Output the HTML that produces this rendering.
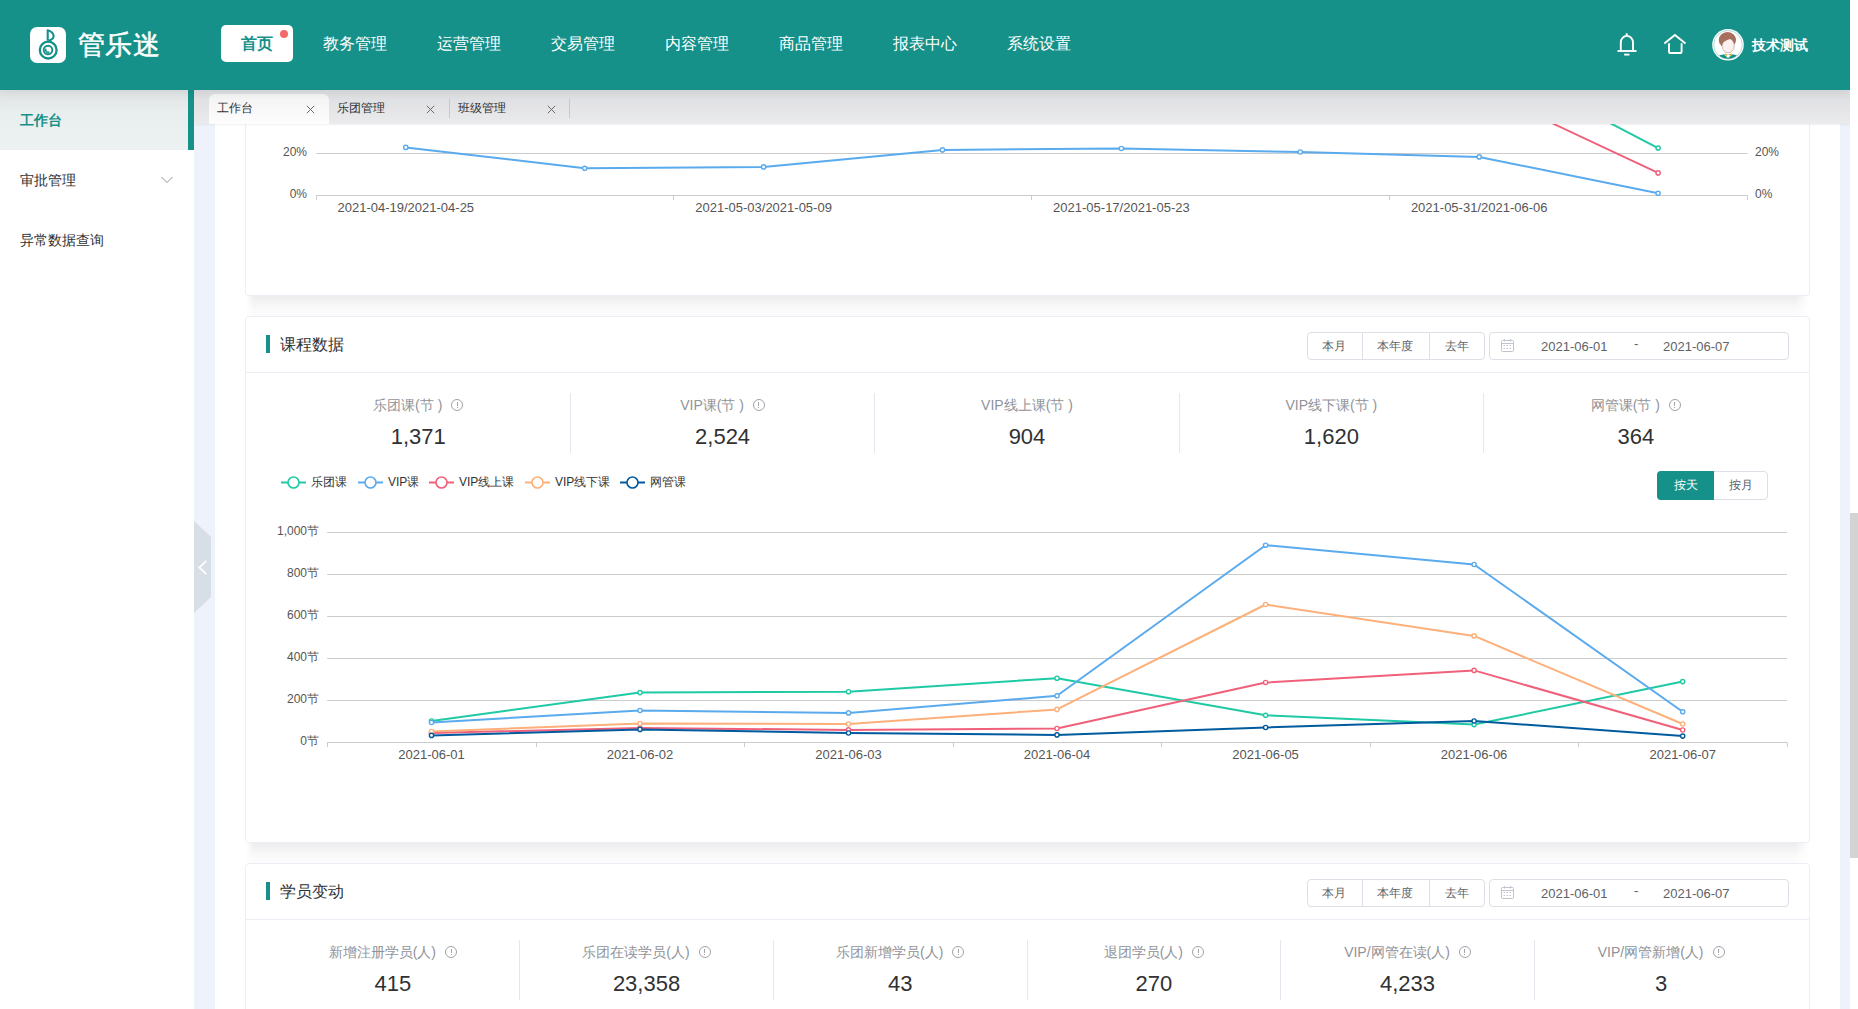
<!DOCTYPE html>
<html><head><meta charset="utf-8">
<style>
*{box-sizing:border-box;margin:0;padding:0}
html,body{width:1858px;height:1009px;overflow:hidden;background:#fff;font-family:"Liberation Sans",sans-serif;color:#303133}
.a{position:absolute}
#header{left:0;top:0;width:1850px;height:90px;background:#15918a;z-index:10;box-shadow:0 2px 10px rgba(0,0,0,.07)}
.nav{position:absolute;top:34px;font-size:16px;line-height:20px;color:#fff;white-space:nowrap}
#sidebar{left:0;top:90px;width:194px;height:919px;background:#fff;z-index:6}
.side{position:absolute;left:0;width:194px;height:60px;font-size:14px;line-height:60px;padding-left:20px;color:#303133}
#tabs{left:194px;top:90px;width:1656px;height:34px;background:linear-gradient(#dcdde0,#ebebed);z-index:5;box-shadow:0 1px 2px rgba(0,0,0,.06)}
.tab{position:absolute;top:4px;height:30px;width:120px;font-size:12px;line-height:28px;padding-left:8px;color:#303133}
.tab .x{position:absolute;left:97px;top:11px}
.card{position:absolute;left:245px;width:1565px;background:#fff;border:1px solid #ebeef5;border-radius:4px;}
.chd{position:absolute;left:0;top:0;width:100%;height:56px;border-bottom:1px solid #ebeef5}
.ttl{position:absolute;left:34px;top:17px;font-size:16px;line-height:22px;color:#303133}
.bar{position:absolute;left:20px;top:18px;width:4px;height:18px;background:#15918a}
.bg{position:absolute;left:1061px;top:15px;width:178px;height:28px;border:1px solid #dcdfe6;border-radius:4px;font-size:12px;color:#606266}
.bg span{position:absolute;top:0;height:26px;line-height:26px;text-align:center}
.dp{position:absolute;left:1243px;top:15px;width:300px;height:28px;border:1px solid #dcdfe6;border-radius:4px;font-size:13px;color:#606266}
.stat{position:absolute;text-align:center}
.sl{font-size:14px;line-height:20px;color:#909399;white-space:nowrap}
.sv{font-size:22px;line-height:30px;color:#303133;margin-top:7px}
.info{display:inline-block;width:12px;height:12px;border:1px solid #a0a3a8;border-radius:50%;position:relative;vertical-align:-1px;margin-left:9px}
.info:after{content:"";position:absolute;left:4.5px;top:2px;width:1px;height:4px;background:#a0a3a8}
.info:before{content:"";position:absolute;left:4.5px;top:7px;width:1px;height:1px;background:#a0a3a8}
.div{position:absolute;width:1px;height:60px;background:#e4e7ed}
svg text{font-family:"Liberation Sans",sans-serif}
</style></head><body>

<!-- content -->
<div class="a" style="left:194px;top:90px;width:21px;height:919px;background:#eef2fa"></div>
<div class="a" style="left:1840px;top:90px;width:10px;height:919px;background:#eef2fa"></div>

<div class="a" style="left:246px;top:296px;width:1563px;height:20px;background:linear-gradient(to right,#fff,rgba(255,255,255,0) 8px,rgba(255,255,255,0) calc(100% - 14px),#fff),linear-gradient(#ececec,#f4f4f4 35%,#fafafa 65%,#fcfcfc)"></div>
<div class="a" style="left:246px;top:843px;width:1563px;height:20px;background:linear-gradient(to right,#fff,rgba(255,255,255,0) 8px,rgba(255,255,255,0) calc(100% - 14px),#fff),linear-gradient(#ececec,#f4f4f4 35%,#fafafa 65%,#fcfcfc)"></div>
<!-- card 1 (partial) -->
<div class="card" style="top:-200px;height:496px"></div>
<!-- card 2 -->
<div class="card" style="top:316px;height:527px">
  <div class="chd"><div class="bar"></div><div class="ttl">课程数据</div>
    <div class="bg"><span style="left:-14.3px;width:80px">本月</span><i class="a" style="left:54px;top:0;width:1px;height:26px;background:#dcdfe6"></i><span style="left:47.4px;width:80px">本年度</span><i class="a" style="left:121px;top:0;width:1px;height:26px;background:#dcdfe6"></i><span style="left:108.5px;width:80px">去年</span></div>
    <div class="dp"><svg class="a" style="left:11px;top:6px" width="14" height="13" viewBox="0 0 14 13"><g fill="none" stroke="#c0c4cc" stroke-width="1"><rect x="0.5" y="1.5" width="12" height="11" rx="1"/><path d="M0.5 4.5 H12.5"/><path d="M3.5 0 V2.5 M9.5 0 V2.5"/></g><g fill="#c0c4cc"><rect x="2.5" y="6" width="1.5" height="1"/><rect x="5.5" y="6" width="1.5" height="1"/><rect x="8.5" y="6" width="1.5" height="1"/><rect x="2.5" y="9" width="1.5" height="1"/><rect x="5.5" y="9" width="1.5" height="1"/><rect x="8.5" y="9" width="1.5" height="1"/></g></svg><span class="a" style="left:51px;top:6px;line-height:15px">2021-06-01</span><span class="a" style="left:144px;top:3px;line-height:15px">-</span><span class="a" style="left:173px;top:6px;line-height:15px">2021-06-07</span></div>
  </div>
<div class="stat" style="left:20.0px;top:78px;width:304.4px"><div class="sl">乐团课(节 )<i class="info"></i></div><div class="sv">1,371</div></div>
<div class="stat" style="left:324.4px;top:78px;width:304.4px"><div class="sl">VIP课(节 )<i class="info"></i></div><div class="sv">2,524</div></div>
<div class="div" style="left:324px;top:76px"></div>
<div class="stat" style="left:628.8px;top:78px;width:304.4px"><div class="sl">VIP线上课(节 )</div><div class="sv">904</div></div>
<div class="div" style="left:628px;top:76px"></div>
<div class="stat" style="left:933.2px;top:78px;width:304.4px"><div class="sl">VIP线下课(节 )</div><div class="sv">1,620</div></div>
<div class="div" style="left:933px;top:76px"></div>
<div class="stat" style="left:1237.6px;top:78px;width:304.4px"><div class="sl">网管课(节 )<i class="info"></i></div><div class="sv">364</div></div>
<div class="div" style="left:1237px;top:76px"></div>
  <div class="a" style="left:1411px;top:154px;width:111px;height:29px;border:1px solid #dcdfe6;border-radius:4px;font-size:12px;color:#606266"><span class="a" style="left:-1px;top:-1px;width:57px;height:29px;background:#15918a;color:#fff;text-align:center;line-height:28px;border-radius:4px 0 0 4px;padding-left:1px">按天</span><span class="a" style="left:56px;top:0;width:54px;height:27px;text-align:center;line-height:27px">按月</span></div>
</div>
<!-- card 3 -->
<div class="card" style="top:863px;height:300px">
  <div class="chd"><div class="bar"></div><div class="ttl">学员变动</div>
    <div class="bg"><span style="left:-14.3px;width:80px">本月</span><i class="a" style="left:54px;top:0;width:1px;height:26px;background:#dcdfe6"></i><span style="left:47.4px;width:80px">本年度</span><i class="a" style="left:121px;top:0;width:1px;height:26px;background:#dcdfe6"></i><span style="left:108.5px;width:80px">去年</span></div>
    <div class="dp"><svg class="a" style="left:11px;top:6px" width="14" height="13" viewBox="0 0 14 13"><g fill="none" stroke="#c0c4cc" stroke-width="1"><rect x="0.5" y="1.5" width="12" height="11" rx="1"/><path d="M0.5 4.5 H12.5"/><path d="M3.5 0 V2.5 M9.5 0 V2.5"/></g><g fill="#c0c4cc"><rect x="2.5" y="6" width="1.5" height="1"/><rect x="5.5" y="6" width="1.5" height="1"/><rect x="8.5" y="6" width="1.5" height="1"/><rect x="2.5" y="9" width="1.5" height="1"/><rect x="5.5" y="9" width="1.5" height="1"/><rect x="8.5" y="9" width="1.5" height="1"/></g></svg><span class="a" style="left:51px;top:6px;line-height:15px">2021-06-01</span><span class="a" style="left:144px;top:3px;line-height:15px">-</span><span class="a" style="left:173px;top:6px;line-height:15px">2021-06-07</span></div>
  </div>
<div class="stat" style="left:20.0px;top:78px;width:253.7px"><div class="sl">新增注册学员(人)<i class="info"></i></div><div class="sv">415</div></div>
<div class="stat" style="left:273.7px;top:78px;width:253.7px"><div class="sl">乐团在读学员(人)<i class="info"></i></div><div class="sv">23,358</div></div>
<div class="div" style="left:273px;top:76px"></div>
<div class="stat" style="left:527.3px;top:78px;width:253.7px"><div class="sl">乐团新增学员(人)<i class="info"></i></div><div class="sv">43</div></div>
<div class="div" style="left:527px;top:76px"></div>
<div class="stat" style="left:781.0px;top:78px;width:253.7px"><div class="sl">退团学员(人)<i class="info"></i></div><div class="sv">270</div></div>
<div class="div" style="left:781px;top:76px"></div>
<div class="stat" style="left:1034.7px;top:78px;width:253.7px"><div class="sl">VIP/网管在读(人)<i class="info"></i></div><div class="sv">4,233</div></div>
<div class="div" style="left:1034px;top:76px"></div>
<div class="stat" style="left:1288.3px;top:78px;width:253.7px"><div class="sl">VIP/网管新增(人)<i class="info"></i></div><div class="sv">3</div></div>
<div class="div" style="left:1288px;top:76px"></div>
</div>

<!-- SVG charts layer -->
<svg class="a" style="left:0;top:0" width="1858" height="1009" viewBox="0 0 1858 1009">
 <g id="chart1">
  <g stroke="#cccccc" stroke-width="1" fill="none">
   <line x1="316.4" y1="153.5" x2="1747.5" y2="153.5"/>
   <line x1="316.4" y1="195.5" x2="1747.5" y2="195.5"/>
   <line x1="316.5" y1="195.5" x2="316.5" y2="200"/>
   <line x1="673.5" y1="195.5" x2="673.5" y2="200"/>
   <line x1="1031.5" y1="195.5" x2="1031.5" y2="200"/>
   <line x1="1389.5" y1="195.5" x2="1389.5" y2="200"/>
   <line x1="1747.5" y1="195.5" x2="1747.5" y2="200"/>
  </g>
  <g font-size="12" fill="#555">
   <text x="307" y="156" text-anchor="end">20%</text>
   <text x="307" y="198" text-anchor="end">0%</text>
   <text x="1755" y="156">20%</text>
   <text x="1755" y="198">0%</text>
   <text x="405.8" y="212" text-anchor="middle" font-size="13">2021-04-19/2021-04-25</text>
   <text x="763.6" y="212" text-anchor="middle" font-size="13">2021-05-03/2021-05-09</text>
   <text x="1121.4" y="212" text-anchor="middle" font-size="13">2021-05-17/2021-05-23</text>
   <text x="1479.2" y="212" text-anchor="middle" font-size="13">2021-05-31/2021-06-06</text>
  </g>
  <g fill="none" stroke-width="2" stroke-linejoin="round">
   <polyline stroke="#1ec9a4" points="1479.2,54.8 1658.1,148.1"/>
   <polyline stroke="#f0607a" points="1479.2,89 1658.1,172.9"/>
   <polyline stroke="#5aaaee" points="405.8,147.4 584.7,168.3 763.6,166.9 942.5,149.9 1121.4,148.5 1300.3,152.0 1479.2,156.9 1658.1,193.3"/>
  </g>
  <g fill="#fff" stroke-width="1.4">
   <g stroke="#1ec9a4"><circle cx="1658.1" cy="148.1" r="2.1"/></g>
   <g stroke="#f0607a"><circle cx="1658.1" cy="172.9" r="2.1"/></g>
   <g stroke="#5aaaee"><circle cx="405.8" cy="147.4" r="2.1"/><circle cx="584.7" cy="168.3" r="2.1"/><circle cx="763.6" cy="166.9" r="2.1"/><circle cx="942.5" cy="149.9" r="2.1"/><circle cx="1121.4" cy="148.5" r="2.1"/><circle cx="1300.3" cy="152" r="2.1"/><circle cx="1479.2" cy="156.9" r="2.1"/><circle cx="1658.1" cy="193.3" r="2.1"/></g>
  </g>
 </g>
<g id="chart2">
 <g stroke="#cccccc" stroke-width="1" fill="none">
  <line x1="327.2" y1="532.5" x2="1787" y2="532.5"/>
  <line x1="327.2" y1="574.5" x2="1787" y2="574.5"/>
  <line x1="327.2" y1="616.5" x2="1787" y2="616.5"/>
  <line x1="327.2" y1="658.5" x2="1787" y2="658.5"/>
  <line x1="327.2" y1="700.5" x2="1787" y2="700.5"/>
  <line x1="327.2" y1="742.5" x2="1787" y2="742.5"/>
  <line x1="327.5" y1="742.5" x2="327.5" y2="747"/>
  <line x1="536.5" y1="742.5" x2="536.5" y2="747"/>
  <line x1="744.5" y1="742.5" x2="744.5" y2="747"/>
  <line x1="953.5" y1="742.5" x2="953.5" y2="747"/>
  <line x1="1161.5" y1="742.5" x2="1161.5" y2="747"/>
  <line x1="1370.5" y1="742.5" x2="1370.5" y2="747"/>
  <line x1="1578.5" y1="742.5" x2="1578.5" y2="747"/>
  <line x1="1787.5" y1="742.5" x2="1787.5" y2="747"/>
 </g>
 <g font-size="12" fill="#555">
  <text x="319" y="536" dy="-1" text-anchor="end">1,000节</text>
  <text x="319" y="578" dy="-1" text-anchor="end">800节</text>
  <text x="319" y="620" dy="-1" text-anchor="end">600节</text>
  <text x="319" y="662" dy="-1" text-anchor="end">400节</text>
  <text x="319" y="704" dy="-1" text-anchor="end">200节</text>
  <text x="319" y="746" dy="-1" text-anchor="end">0节</text>
  <text x="431.5" y="759" text-anchor="middle" font-size="13">2021-06-01</text>
  <text x="640.0" y="759" text-anchor="middle" font-size="13">2021-06-02</text>
  <text x="848.5" y="759" text-anchor="middle" font-size="13">2021-06-03</text>
  <text x="1057.0" y="759" text-anchor="middle" font-size="13">2021-06-04</text>
  <text x="1265.6" y="759" text-anchor="middle" font-size="13">2021-06-05</text>
  <text x="1474.1" y="759" text-anchor="middle" font-size="13">2021-06-06</text>
  <text x="1682.7" y="759" text-anchor="middle" font-size="13">2021-06-07</text>
 </g>
 <g fill="none" stroke-width="2" stroke-linejoin="round">
  <polyline stroke="#1ec9a4" points="431.5,721 640.0,692.6 848.5,691.7 1057.0,678.2 1265.6,715.3 1474.1,724.6 1682.7,681.6"/>
  <polyline stroke="#5aaaee" points="431.5,722.5 640.0,710.5 848.5,712.9 1057.0,695.8 1265.6,545.2 1474.1,564.5 1682.7,711.8"/>
  <polyline stroke="#f0607a" points="431.5,733 640.0,728 848.5,729.9 1057.0,728.5 1265.6,682.5 1474.1,670.4 1682.7,730"/>
  <polyline stroke="#fdb07a" points="431.5,731.5 640.0,723.5 848.5,724 1057.0,709.4 1265.6,604.5 1474.1,635.9 1682.7,724"/>
  <polyline stroke="#005a9e" points="431.5,735.4 640.0,729.4 848.5,733 1057.0,734.9 1265.6,727.5 1474.1,721 1682.7,736.1"/>
 </g>
 <g fill="#fff" stroke-width="1.4">
  <g stroke="#1ec9a4"><circle cx="431.5" cy="721" r="2.1"/><circle cx="640.0" cy="692.6" r="2.1"/><circle cx="848.5" cy="691.7" r="2.1"/><circle cx="1057.0" cy="678.2" r="2.1"/><circle cx="1265.6" cy="715.3" r="2.1"/><circle cx="1474.1" cy="724.6" r="2.1"/><circle cx="1682.7" cy="681.6" r="2.1"/></g>
  <g stroke="#5aaaee"><circle cx="431.5" cy="722.5" r="2.1"/><circle cx="640.0" cy="710.5" r="2.1"/><circle cx="848.5" cy="712.9" r="2.1"/><circle cx="1057.0" cy="695.8" r="2.1"/><circle cx="1265.6" cy="545.2" r="2.1"/><circle cx="1474.1" cy="564.5" r="2.1"/><circle cx="1682.7" cy="711.8" r="2.1"/></g>
  <g stroke="#f0607a"><circle cx="431.5" cy="733" r="2.1"/><circle cx="640.0" cy="728" r="2.1"/><circle cx="848.5" cy="729.9" r="2.1"/><circle cx="1057.0" cy="728.5" r="2.1"/><circle cx="1265.6" cy="682.5" r="2.1"/><circle cx="1474.1" cy="670.4" r="2.1"/><circle cx="1682.7" cy="730" r="2.1"/></g>
  <g stroke="#fdb07a"><circle cx="431.5" cy="731.5" r="2.1"/><circle cx="640.0" cy="723.5" r="2.1"/><circle cx="848.5" cy="724" r="2.1"/><circle cx="1057.0" cy="709.4" r="2.1"/><circle cx="1265.6" cy="604.5" r="2.1"/><circle cx="1474.1" cy="635.9" r="2.1"/><circle cx="1682.7" cy="724" r="2.1"/></g>
  <g stroke="#005a9e"><circle cx="431.5" cy="735.4" r="2.1"/><circle cx="640.0" cy="729.4" r="2.1"/><circle cx="848.5" cy="733" r="2.1"/><circle cx="1057.0" cy="734.9" r="2.1"/><circle cx="1265.6" cy="727.5" r="2.1"/><circle cx="1474.1" cy="721" r="2.1"/><circle cx="1682.7" cy="736.1" r="2.1"/></g>
 </g>
 <g>
  <line x1="281" y1="482.5" x2="306" y2="482.5" stroke="#1ec9a4" stroke-width="2"/><circle cx="293.5" cy="482.5" r="5.5" fill="#fff" stroke="#1ec9a4" stroke-width="1.6"/><text x="311" y="486" font-size="12" fill="#333">乐团课</text>
  <line x1="358" y1="482.5" x2="383" y2="482.5" stroke="#5aaaee" stroke-width="2"/><circle cx="370.5" cy="482.5" r="5.5" fill="#fff" stroke="#5aaaee" stroke-width="1.6"/><text x="388" y="486" font-size="12" fill="#333">VIP课</text>
  <line x1="429" y1="482.5" x2="454" y2="482.5" stroke="#f0607a" stroke-width="2"/><circle cx="441.5" cy="482.5" r="5.5" fill="#fff" stroke="#f0607a" stroke-width="1.6"/><text x="459" y="486" font-size="12" fill="#333">VIP线上课</text>
  <line x1="525" y1="482.5" x2="550" y2="482.5" stroke="#fdb07a" stroke-width="2"/><circle cx="537.5" cy="482.5" r="5.5" fill="#fff" stroke="#fdb07a" stroke-width="1.6"/><text x="555" y="486" font-size="12" fill="#333">VIP线下课</text>
  <line x1="620" y1="482.5" x2="645" y2="482.5" stroke="#005a9e" stroke-width="2"/><circle cx="632.5" cy="482.5" r="5.5" fill="#fff" stroke="#005a9e" stroke-width="1.6"/><text x="650" y="486" font-size="12" fill="#333">网管课</text>
 </g>
</g>
</svg>

<!-- tabs -->
<div id="tabs" class="a">
  <div class="tab" style="left:15px;background:linear-gradient(#f3f3f4,#fdfdfd);border-radius:6px 6px 0 0">工作台<svg class="x" width="9" height="9" viewBox="0 0 9 9"><path d="M0.8 0.8 L8.2 8.2 M8.2 0.8 L0.8 8.2" stroke="#6a6a6a" stroke-width="1"/></svg></div>
  <div class="tab" style="left:135px">乐团管理<svg class="x" width="9" height="9" viewBox="0 0 9 9"><path d="M0.8 0.8 L8.2 8.2 M8.2 0.8 L0.8 8.2" stroke="#6a6a6a" stroke-width="1"/></svg></div>
  <div class="a" style="left:255px;top:8px;width:1px;height:20px;background:#c8c9cc"></div>
  <div class="tab" style="left:256px">班级管理<svg class="x" width="9" height="9" viewBox="0 0 9 9"><path d="M0.8 0.8 L8.2 8.2 M8.2 0.8 L0.8 8.2" stroke="#6a6a6a" stroke-width="1"/></svg></div>
  <div class="a" style="left:375px;top:8px;width:1px;height:20px;background:#c8c9cc"></div>
</div>

<!-- sidebar -->
<div id="sidebar" class="a">
  <div class="side" style="top:0;background:linear-gradient(#dfe3e3,#e9eeee 40%,#ecf2f2);color:#15918a;font-weight:bold">工作台<div class="a" style="right:0;top:0;width:6px;height:60px;background:#15918a"></div></div>
  <div class="side" style="top:60px">审批管理<svg class="a" style="left:161px;top:26px" width="12" height="8" viewBox="0 0 12 8"><path d="M0.5 1 L6 6.5 L11.5 1" fill="none" stroke="#909399" stroke-width="1"/></svg></div>
  <div class="side" style="top:120px">异常数据查询</div>
</div>
<!-- collapse tab -->
<svg class="a" style="left:194px;top:521px;z-index:7" width="18" height="92" viewBox="0 0 18 92"><path d="M0 0 L17 16 L17 76 L0 92 Z" fill="#d7dee6"/><path d="M12.3 39.8 L5.3 46.5 L12.3 53.2" fill="none" stroke="#fff" stroke-width="1.8"/></svg>

<!-- header -->
<div id="header" class="a">
  <div class="a" style="left:30px;top:27px;width:36px;height:36px;background:#fff;border-radius:7px">
    <svg width="36" height="36" viewBox="0 0 36 36"><circle cx="18.2" cy="23.1" r="8.4" fill="none" stroke="#15918a" stroke-width="2.3"/><circle cx="18" cy="23" r="4.3" fill="none" stroke="#15918a" stroke-width="1.9"/><path d="M17.7 13.8 V3.3 Q23.6 5 23.6 9.3 Q23.6 12.2 18.6 13.8" fill="none" stroke="#15918a" stroke-width="2.1" stroke-linejoin="round"/><path d="M15.7 22.4 A2.5 2.5 0 0 0 18.8 25.3" fill="none" stroke="#15918a" stroke-width="1.6" stroke-linecap="round"/></svg>
  </div>
  <div class="a" style="left:78px;top:26.5px;font-size:27px;line-height:36px;color:#fff;-webkit-text-stroke:0.5px #fff;letter-spacing:0.3px">管乐迷</div>
  <div class="a" style="left:221px;top:25px;width:72px;height:37px;background:#fff;border-radius:5px"></div>
  <div class="nav" style="left:241px;color:#15918a;font-weight:bold">首页</div>
  <div class="a" style="left:280px;top:30px;width:8px;height:8px;border-radius:50%;background:#f36a6a"></div>
  <div class="nav" style="left:323px">教务管理</div>
  <div class="nav" style="left:437px">运营管理</div>
  <div class="nav" style="left:551px">交易管理</div>
  <div class="nav" style="left:665px">内容管理</div>
  <div class="nav" style="left:779px">商品管理</div>
  <div class="nav" style="left:893px">报表中心</div>
  <div class="nav" style="left:1007px">系统设置</div>
  <svg class="a" style="left:1600px;top:25px" width="160" height="40" viewBox="1600 25 160 40">
   <g fill="none" stroke="#fff" stroke-width="1.9" stroke-linecap="butt">
    <path d="M1620.8 50.5 V42.5 A6.1 6.6 0 0 1 1633 42.5 V50.5"/>
    <path d="M1617.5 51 H1636.5"/>
    <path d="M1624.2 54.6 H1629.4"/>
    <path d="M1626.7 33.3 V36"/>
   </g>
   <g fill="none" stroke="#fff" stroke-width="1.9" stroke-linejoin="miter">
    <path d="M1664.3 43.6 L1674.9 35 L1685.5 43.6"/>
    <path d="M1669 43.2 V51.4 Q1669 53 1670.6 53 H1680 Q1681.6 53 1681.6 51.4 V43.2"/>
   </g>
   <circle cx="1728" cy="44.8" r="15.8" fill="#fff"/>
   <circle cx="1728" cy="44.8" r="14.3" fill="none" stroke="#7cc4bf" stroke-width="0.6"/>
   <clipPath id="av"><circle cx="1728" cy="44.8" r="13.9"/></clipPath>
   <g clip-path="url(#av)">
    <path d="M1715 62 Q1716 55.5 1723 54.6 L1733.5 54.6 Q1740 55.5 1741 62 Z" fill="#15918a"/>
    <path d="M1724 54.4 L1728 58 L1732.4 54.4 Z" fill="#fff"/>
    <path d="M1724.3 53.3 L1726.3 56.6 L1727 54.2 Z M1732 53.3 L1730 56.6 L1729.3 54.2 Z" fill="#e0a21a"/>
    <ellipse cx="1727.3" cy="40" rx="8.6" ry="7.8" fill="#a96f5e"/>
    <ellipse cx="1728.2" cy="45.6" rx="6.1" ry="7.2" fill="#fdf1ef" stroke="#6e5048" stroke-width="0.35"/>
    <path d="M1721.6 45.5 Q1722.8 41 1730.8 38.8 Q1734 40.5 1734.6 44.5 L1736 39 Q1734 32.3 1727.5 32.3 Q1720.5 32.8 1719.8 39.5 Z" fill="#a96f5e"/>
   </g>
  </svg>
  <div class="a" style="left:1752px;top:35px;font-size:14px;line-height:20px;color:#fff;font-weight:bold">技术测试</div>
</div>

<!-- scrollbar -->
<div class="a" style="left:1850px;top:0;width:8px;height:1009px;background:#fff;z-index:11"></div>
<div class="a" style="left:1850px;top:513px;width:8px;height:345px;background:#d3d3d3;z-index:12"></div>
</body></html>
